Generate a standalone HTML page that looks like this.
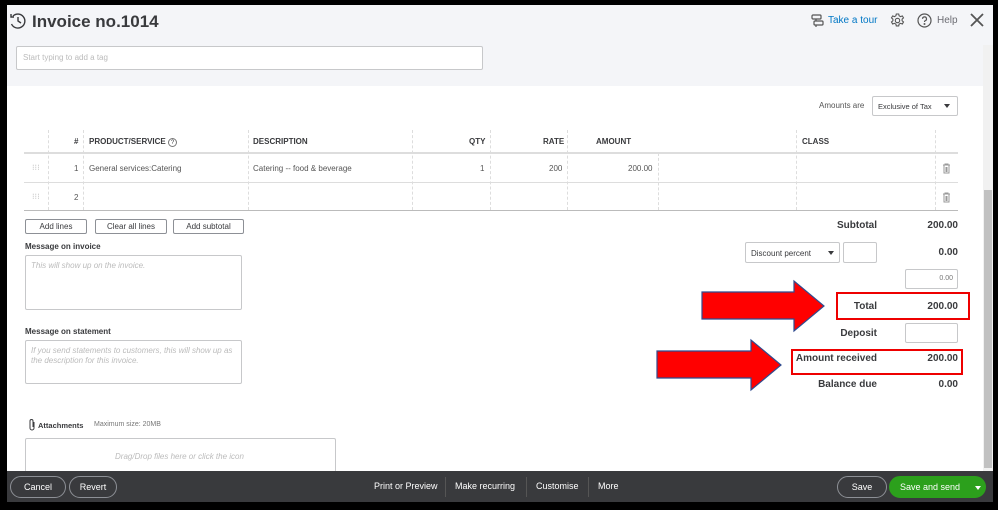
<!DOCTYPE html>
<html><head><meta charset="utf-8"><style>
*{box-sizing:border-box;margin:0;padding:0}
body{width:998px;height:510px;background:#000;font-family:"Liberation Sans",sans-serif;position:relative;overflow:hidden;color:#393a3d}
.a{position:absolute}
.hdr{left:7px;top:5px;width:986px;height:81px;background:#f4f5f8}
.main{left:7px;top:86px;width:976px;height:385px;background:#fff}
.sb{left:983px;top:45px;width:10px;height:426px;background:#f1f1f1}
.thumb{left:984px;top:190px;width:8px;height:278px;background:#c1c1c1}
.th{font-size:8px;font-weight:bold;color:#393a3d}
.td{font-size:8px;color:#555}
.vl{position:absolute;border-left:1px dashed #ddd;}
.btn{position:absolute;border:1px solid #8d9096;border-radius:2px;background:#fff;font-size:8px;text-align:center;line-height:13px;color:#393a3d;height:15px}
.lbl{font-size:8px;font-weight:bold}
.box{position:absolute;border:1px solid #c7c8ca;border-radius:2px;background:#fff}
.ph{font-size:8px;color:#bbb;font-style:italic}
.r{font-size:10px;font-weight:bold;text-align:right}
.ft{left:7px;top:471px;width:986px;height:31px;background:#393a3d}
.fb{position:absolute;border:1px solid #8d9096;border-radius:14px;color:#fff;font-size:9px;text-align:center;line-height:20px;height:22px;top:5px}
.fl{position:absolute;color:#fff;font-size:9px;top:10px}
.tri{position:absolute;width:0;height:0;border-left:3px solid transparent;border-right:3px solid transparent;border-top:4px solid #393a3d}
</style></head><body>
<div class="a hdr"></div>
<svg class="a" style="left:9px;top:12px" width="18" height="18" viewBox="0 0 18 18" fill="none" stroke="#393a3d" stroke-width="1.4"><path d="M4 4a7 7 0 1 1-1.5 8"/><path d="M9 5v4l3 2"/><path d="M2 2v3h3"/></svg>
<div class="a" style="left:32px;top:12px;font-size:17px;font-weight:bold;color:#393a3d">Invoice no.1014</div>
<div class="a box" style="left:16px;top:46px;width:467px;height:24px"></div>
<div class="a ph" style="left:23px;top:53px;font-style:normal">Start typing to add a tag</div>
<svg class="a" style="left:811px;top:14px" width="13" height="13" viewBox="0 0 13 13" fill="none" stroke="#555" stroke-width="1.2"><rect x="1" y="1" width="9" height="4" rx="1"/><rect x="3" y="7" width="9" height="4" rx="1"/><path d="M5 5v2M5 11v2"/></svg>
<div class="a" style="left:828px;top:15px;font-size:10px;color:#0077c5">Take a tour</div>
<svg class="a" style="left:890px;top:13px" width="15" height="15" viewBox="0 0 15 15" fill="none" stroke="#555" stroke-width="1.1"><circle cx="7.5" cy="7.5" r="2.2"/><path d="M6.3 1h2.4l.4 1.8 1.5.8 1.7-.7 1.2 2-1.4 1.2v1.7l1.4 1.2-1.2 2-1.7-.7-1.5.8-.4 1.8H6.3l-.4-1.8-1.5-.8-1.7.7-1.2-2 1.4-1.2V6.1L1.5 4.9l1.2-2 1.7.7 1.5-.8z"/></svg>
<svg class="a" style="left:917px;top:13px" width="15" height="15" viewBox="0 0 15 15" fill="none" stroke="#555" stroke-width="1.2"><circle cx="7.5" cy="7.5" r="6.5"/><path d="M5.5 5.8a2 2 0 1 1 2.5 2c-.5.2-.5.6-.5 1.2"/><circle cx="7.5" cy="11" r=".4" fill="#555"/></svg>
<div class="a" style="left:937px;top:15px;font-size:10px;color:#6b6c72">Help</div>
<svg class="a" style="left:969px;top:12px" width="16" height="16" viewBox="0 0 16 16" stroke="#555" stroke-width="1.8"><path d="M2 2l12 12M14 2L2 14"/></svg>
<div class="a main"></div>
<div class="a sb"></div><div class="a thumb"></div>
<div class="a" style="left:819px;top:101px;font-size:8px;color:#555">Amounts are</div>
<div class="a box" style="left:872px;top:96px;width:86px;height:20px"></div>
<div class="a" style="left:878px;top:102px;font-size:7.5px;color:#393a3d">Exclusive of Tax</div>
<div class="tri" style="left:944px;top:104px"></div>
<!-- table -->
<div class="a" style="left:24px;top:152px;width:934px;border-top:2px solid #ddd"></div>
<div class="a" style="left:24px;top:182px;width:934px;border-top:1px solid #ddd"></div>
<div class="a" style="left:24px;top:210px;width:934px;border-top:1px solid #bbb"></div>
<div class="vl" style="left:48px;top:130px;height:80px"></div>
<div class="vl" style="left:83px;top:130px;height:80px"></div>
<div class="vl" style="left:248px;top:130px;height:80px"></div>
<div class="vl" style="left:412px;top:130px;height:80px"></div>
<div class="vl" style="left:490px;top:130px;height:80px"></div>
<div class="vl" style="left:567px;top:130px;height:80px"></div>
<div class="vl" style="left:658px;top:153px;height:57px"></div>
<div class="vl" style="left:796px;top:130px;height:80px"></div>
<div class="vl" style="left:935px;top:130px;height:80px"></div>
<div class="a th" style="left:74px;top:137px">#</div>
<div class="a th" style="left:89px;top:137px">PRODUCT/SERVICE <span style="font-weight:normal;border:1px solid #777;border-radius:50%;display:inline-block;width:9px;height:9px;font-size:6px;text-align:center;line-height:8px">?</span></div>
<div class="a th" style="left:253px;top:137px">DESCRIPTION</div>
<div class="a th" style="left:469px;top:137px">QTY</div>
<div class="a th" style="left:543px;top:137px">RATE</div>
<div class="a th" style="left:596px;top:137px">AMOUNT</div>
<div class="a th" style="left:802px;top:137px">CLASS</div>
<div class="a td" style="left:32px;top:163px;color:#bbb">⁝⁝⁝</div>
<div class="a td" style="left:32px;top:192px;color:#bbb">⁝⁝⁝</div>
<div class="a td" style="left:74px;top:164px">1</div>
<div class="a td" style="left:74px;top:193px">2</div>
<div class="a td" style="left:89px;top:164px">General services:Catering</div>
<div class="a td" style="left:253px;top:164px">Catering -- food &amp; beverage</div>
<div class="a td" style="left:480px;top:164px">1</div>
<div class="a td" style="left:549px;top:164px">200</div>
<div class="a td" style="left:628px;top:164px">200.00</div>
<svg class="a" style="left:942px;top:163px" width="9" height="11" viewBox="0 0 9 11" fill="none" stroke="#999"><path d="M1 2h7M3 2V1h3v1M2 2v8h5V2M4 4v5M5 4v5"/></svg>
<svg class="a" style="left:942px;top:192px" width="9" height="11" viewBox="0 0 9 11" fill="none" stroke="#999"><path d="M1 2h7M3 2V1h3v1M2 2v8h5V2M4 4v5M5 4v5"/></svg>
<div class="btn" style="left:25px;top:219px;width:62px">Add lines</div>
<div class="btn" style="left:95px;top:219px;width:72px">Clear all lines</div>
<div class="btn" style="left:173px;top:219px;width:71px">Add subtotal</div>
<div class="a lbl" style="left:25px;top:242px">Message on invoice</div>
<div class="box" style="left:25px;top:255px;width:217px;height:55px"></div>
<div class="a ph" style="left:31px;top:261px">This will show up on the invoice.</div>
<div class="a lbl" style="left:25px;top:327px">Message on statement</div>
<div class="box" style="left:25px;top:340px;width:217px;height:44px"></div>
<div class="a ph" style="left:31px;top:346px;line-height:10px;width:210px">If you send statements to customers, this will show up as the description for this invoice.</div>
<svg class="a" style="left:28px;top:418px" width="8" height="13" viewBox="0 0 8 13" fill="none" stroke="#393a3d"><path d="M6 4v6a2 2 0 0 1-4 0V3a1.5 1.5 0 0 1 3 0v6"/></svg>
<div class="a lbl" style="left:38px;top:421px;font-size:7.5px">Attachments</div>
<div class="a" style="left:94px;top:421px;font-size:7px;color:#777">Maximum size: 20MB</div>
<div class="box" style="left:25px;top:438px;width:311px;height:34px;border-bottom:none"></div>
<div class="a ph" style="left:115px;top:452px">Drag/Drop files here or click the icon</div>
<!-- totals -->
<div class="a r" style="left:800px;top:220px;width:77px">Subtotal</div>
<div class="a r" style="left:880px;top:220px;width:78px">200.00</div>
<div class="box" style="left:745px;top:242px;width:95px;height:21px"></div>
<div class="a" style="left:751px;top:249px;font-size:8px">Discount percent</div>
<div class="tri" style="left:828px;top:251px"></div>
<div class="box" style="left:843px;top:242px;width:34px;height:21px"></div>
<div class="a r" style="left:880px;top:247px;width:78px">0.00</div>
<div class="box" style="left:905px;top:269px;width:53px;height:20px"></div>
<div class="a" style="left:905px;top:275px;width:48px;text-align:right;font-size:7px;color:#777">0.00</div>
<div class="a r" style="left:800px;top:301px;width:77px">Total</div>
<div class="a r" style="left:880px;top:301px;width:78px">200.00</div>
<div class="a r" style="left:800px;top:328px;width:77px">Deposit</div>
<div class="box" style="left:905px;top:323px;width:53px;height:20px"></div>
<div class="a r" style="left:780px;top:353px;width:97px">Amount received</div>
<div class="a r" style="left:880px;top:353px;width:78px">200.00</div>
<div class="a r" style="left:780px;top:379px;width:97px">Balance due</div>
<div class="a r" style="left:880px;top:379px;width:78px">0.00</div>
<div class="a" style="left:836px;top:292px;width:134px;height:28px;border:2px solid #e00"></div>
<div class="a" style="left:791px;top:349px;width:172px;height:26px;border:2px solid #e00"></div>
<svg class="a" style="left:700px;top:279px" width="126" height="54"><path d="M2 13h92V2l30 25-30 25V40H2z" fill="#f00" stroke="#2f4b8f" stroke-width="1.2"/></svg>
<svg class="a" style="left:655px;top:338px" width="128" height="54"><path d="M2 13h94V2l30 25-30 25V40H2z" fill="#f00" stroke="#2f4b8f" stroke-width="1.2"/></svg>
<!-- footer -->
<div class="a ft">
<div class="fb" style="left:3px;width:56px">Cancel</div>
<div class="fb" style="left:62px;width:48px">Revert</div>
<div class="fl" style="left:367px">Print or Preview</div>
<div class="a" style="left:438px;top:6px;height:20px;border-left:1px solid #555"></div>
<div class="fl" style="left:448px">Make recurring</div>
<div class="a" style="left:519px;top:6px;height:20px;border-left:1px solid #555"></div>
<div class="fl" style="left:529px">Customise</div>
<div class="a" style="left:581px;top:6px;height:20px;border-left:1px solid #555"></div>
<div class="fl" style="left:591px">More</div>
<div class="fb" style="left:830px;width:50px">Save</div>
<div class="fb" style="left:882px;width:97px;background:#2ca01c;border-color:#2ca01c;text-align:left;padding-left:10px">Save and send <span class="tri" style="left:85px;top:9px;border-top-color:#fff"></span></div>
</div>
</body></html>
